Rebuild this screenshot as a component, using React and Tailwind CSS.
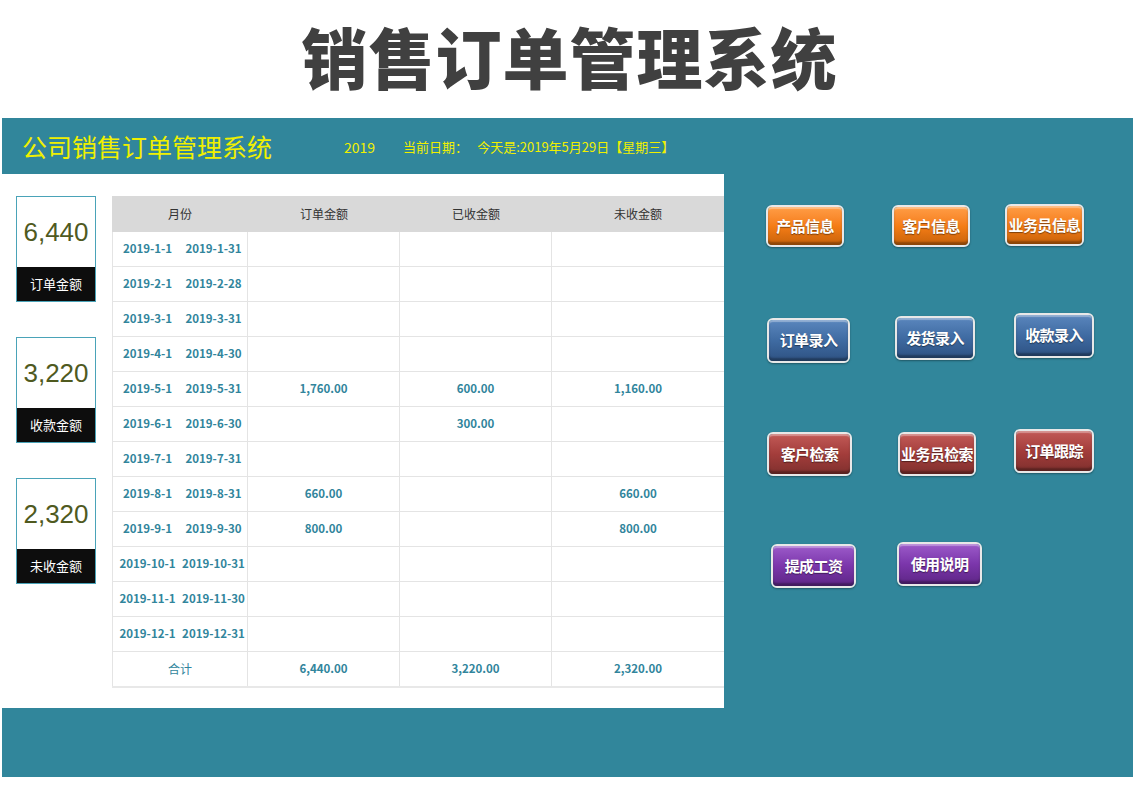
const cjk = { fontFamily: '"Noto Sans CJK SC", "Noto Sans", sans-serif' };

const months = [
	['2019-1-1', '2019-1-31', '', '', ''],
	['2019-2-1', '2019-2-28', '', '', ''],
	['2019-3-1', '2019-3-31', '', '', ''],
	['2019-4-1', '2019-4-30', '', '', ''],
	['2019-5-1', '2019-5-31', '1,760.00', '600.00', '1,160.00'],
	['2019-6-1', '2019-6-30', '', '300.00', ''],
	['2019-7-1', '2019-7-31', '', '', ''],
	['2019-8-1', '2019-8-31', '660.00', '', '660.00'],
	['2019-9-1', '2019-9-30', '800.00', '', '800.00'],
	['2019-10-1', '2019-10-31', '', '', ''],
	['2019-11-1', '2019-11-30', '', '', ''],
	['2019-12-1', '2019-12-31', '', '', ''],
];

const cards = [
	{ value: '6,440', label: '订单金额' },
	{ value: '3,220', label: '收款金额' },
	{ value: '2,320', label: '未收金额' },
];

const tones = {
	orange: 'bg-gradient-to-b from-[#ff9d45] via-[#f57d16] to-[#c8620a]',
	blue: 'bg-gradient-to-b from-[#5a86bd] via-[#3f6ba2] to-[#2e5283]',
	red: 'bg-gradient-to-b from-[#c25a57] via-[#a33d3b] to-[#80302e]',
	purple: 'bg-gradient-to-b from-[#9c5ac9] via-[#7b36ab] to-[#5e2686]',
};

const Btn = ({ label, tone, className }) =>
	<div className={ `rounded-[6px] border-[2px] border-[#e8e8e8] shadow-[0_1px_2px_rgba(0,0,0,0.35)] ${ className }` }>
		<div className={ `h-full w-full rounded-[4px] flex items-center justify-center whitespace-nowrap text-white font-bold text-[15px] tracking-[-0.6px] shadow-[inset_0_-3px_2px_rgba(0,0,0,0.3),inset_0_2px_1px_rgba(255,255,255,0.35)] [text-shadow:0_1px_1px_rgba(0,0,0,0.45)] ${ tones[tone] }` }>
			{ label }
		</div>
	</div>;

const App = () =>
	<div className="w-[1139px] h-[803px] bg-white overflow-hidden" style={ cjk }>
		<h1 className="h-[118px] flex items-center justify-center pb-[8px] text-[66px] font-black text-[#404040] tracking-[1px]">
			销售订单管理系统
		</h1>
		<div className="ml-[2px] w-[1131px] h-[659px] bg-[#31869b] flex flex-col">
			<div className="h-[56px] flex items-center text-[#f0f000]">
				<span className="ml-[20px] text-[25px] leading-none">公司销售订单管理系统</span>
				<span className="ml-[72px] text-[14px] mt-[2px]">2019</span>
				<span className="ml-[28px] text-[13px] mt-[2px]">当前日期：</span>
				<span className="ml-[9px] text-[13px] mt-[2px]">今天是:2019年5月29日【星期三】</span>
			</div>
			<div className="flex h-[534px]">
				<div className="w-[722px] bg-white flex pt-[22px]">
					<div className="ml-[14px] w-[80px] flex flex-col gap-[35px]">
						{ cards.map((c) =>
							<div key={ c.label } className="border border-[#4aa3b8]">
								<div className="h-[70px] bg-white flex items-center justify-center text-[26px] text-[#4f5a1f]" style={ { fontFamily: '"Liberation Sans", sans-serif' } }>
									{ c.value }
								</div>
								<div className="h-[34px] bg-[#0d0d0d] flex items-center justify-center text-white text-[13px]">
									{ c.label }
								</div>
							</div>) }
					</div>
					<div className="ml-[16px] w-[612px]">
						<div className="h-[36px] bg-[#d9d9d9] grid grid-cols-[136px_152px_152px_172px] items-center text-[12px] text-[#333]">
							<span className="text-center">月份</span>
							<span className="text-center">订单金额</span>
							<span className="text-center">已收金额</span>
							<span className="text-center">未收金额</span>
						</div>
						{ months.map((m) =>
							<div key={ m[0] } className="h-[35px] grid grid-cols-[136px_152px_152px_172px] border-b border-[#e4e4e4] text-[11.5px] font-bold text-[#31859c]">
								<div className="border-l border-r border-[#e4e4e4] grid grid-cols-2 items-center">
									<span className="text-center pl-[2px]">{ m[0] }</span>
									<span className="text-center">{ m[1] }</span>
								</div>
								<div className="border-r border-[#e4e4e4] flex items-center justify-center">{ m[2] }</div>
								<div className="border-r border-[#e4e4e4] flex items-center justify-center">{ m[3] }</div>
								<div className="flex items-center justify-center">{ m[4] }</div>
							</div>) }
						<div className="h-[36px] grid grid-cols-[136px_152px_152px_172px] border-b-2 border-[#e8e8e8] text-[11.5px] text-[#31859c]">
							<div className="border-l border-r border-[#e4e4e4] flex items-center justify-center text-[12px]">合计</div>
							<div className="border-r border-[#e4e4e4] flex items-center justify-center font-bold">6,440.00</div>
							<div className="border-r border-[#e4e4e4] flex items-center justify-center font-bold">3,220.00</div>
							<div className="flex items-center justify-center font-bold">2,320.00</div>
						</div>
					</div>
				</div>
				<div className="flex-1 flex flex-col">
					<div className="flex items-start mt-[31px] h-[42px]">
						<Btn label="产品信息" tone="orange" className="ml-[42px] w-[78px] h-[42px]" />
						<Btn label="客户信息" tone="orange" className="ml-[48px] w-[78px] h-[42px]" />
						<Btn label="业务员信息" tone="orange" className="ml-[35px] w-[79px] h-[42px] -mt-[1px]" />
					</div>
					<div className="flex items-start mt-[69px] h-[45px]">
						<Btn label="订单录入" tone="blue" className="ml-[43px] w-[83px] h-[45px] mt-[2px]" />
						<Btn label="发货录入" tone="blue" className="ml-[45px] w-[80px] h-[44px]" />
						<Btn label="收款录入" tone="blue" className="ml-[39px] w-[80px] h-[45px] -mt-[3px]" />
					</div>
					<div className="flex items-start mt-[71px] h-[44px]">
						<Btn label="客户检索" tone="red" className="ml-[43px] w-[85px] h-[44px]" />
						<Btn label="业务员检索" tone="red" className="ml-[46px] w-[78px] h-[44px]" />
						<Btn label="订单跟踪" tone="red" className="ml-[38px] w-[80px] h-[44px] -mt-[3px]" />
					</div>
					<div className="flex items-start mt-[66px] h-[44px]">
						<Btn label="提成工资" tone="purple" className="ml-[47px] w-[85px] h-[44px] mt-[2px]" />
						<Btn label="使用说明" tone="purple" className="ml-[41px] w-[85px] h-[44px]" />
					</div>
				</div>
			</div>
		</div>
	</div>;

export default App;
